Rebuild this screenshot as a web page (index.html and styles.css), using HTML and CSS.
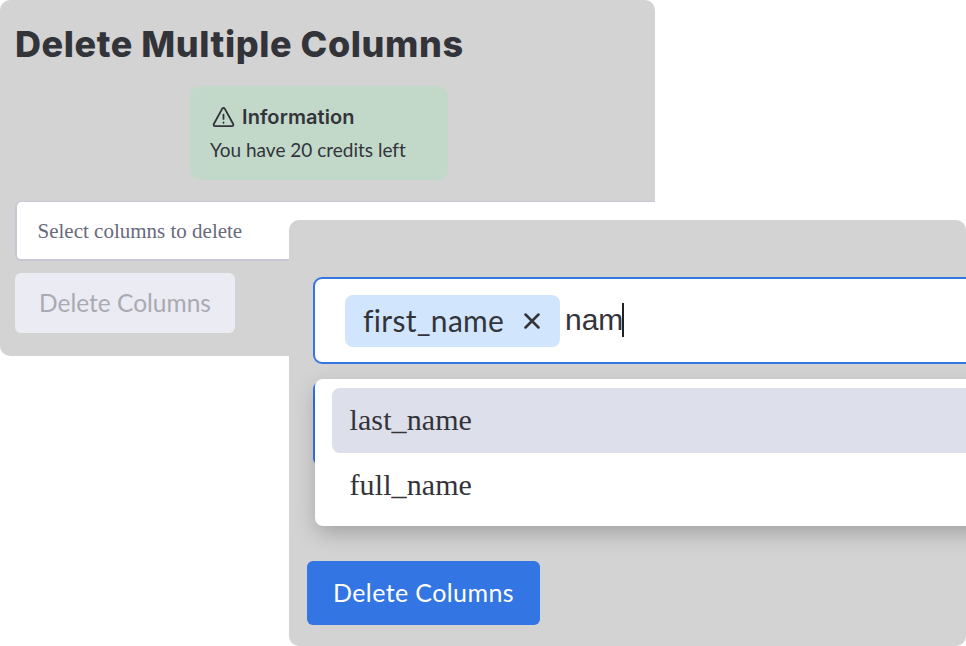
FILE: index.html
```html
<!DOCTYPE html>
<html lang="en">
<head>
<meta charset="utf-8">
<title>Delete Multiple Columns</title>
<link rel="stylesheet" href="styles.css">
</head>
<body>
<main class="stage">
  <section class="card card-back">
    <h1 class="title">Delete Multiple Columns</h1>
    <div class="notice">
      <div class="notice-head">
        <svg class="notice-icon" viewBox="0 0 24 24" fill="none" stroke="currentColor" stroke-width="1.9" stroke-linecap="round" stroke-linejoin="round"><path d="M12 2c-.6 0-1 .3-1.300.8L1.900 18.800c-.6 1.100.1 2.200 1.300 2.200h17.600c1.200 0 1.900-1.100 1.300-2.200L13.300 2.800c-.3-.5-.7-.8-1.300-.8z"/><path d="M12 9v4.500M12 17.200v.3"/></svg>
        <strong class="notice-title">Information</strong>
      </div>
      <p class="notice-text">You have 20 credits left</p>
    </div>
    <div class="select"><span class="placeholder">Select columns to delete</span></div>
    <button class="button button-disabled" disabled><span>Delete Columns</span></button>
  </section>
  <section class="card card-front">
    <div class="field">
      <span class="chip"><span class="chip-label">first_name</span>
        <svg class="chip-close" viewBox="0 0 16 16" fill="none" stroke="currentColor" stroke-width="2.500" stroke-linecap="round"><path d="M1.500 1.500l13 13M14.500 1.500l-13 13"/></svg>
      </span>
      <span class="query">nam</span><span class="caret"></span>
    </div>
    <div class="menu-wrap">
      <div class="menu">
        <div class="option option-active">last_name</div>
        <div class="option">full_name</div>
      </div>
    </div>
    <button class="button button-primary"><span>Delete Columns</span></button>
  </section>
</main>
</body>
</html>
```
FILE: styles.css
```css
* { box-sizing: border-box; }
body { margin: 0; background: #fff; color: #33343a; font-family: Lato, sans-serif; font-variant-ligatures: none; overflow: hidden; }
.stage { display: grid; width: 966px; height: 646px; }
.card { grid-area: 1 / 1; background: #d3d3d3; border-radius: 10px; overflow: hidden; display: flex; flex-direction: column; align-items: flex-start; }
.card-back { width: 655px; height: 356px; padding: 21px 0 0 15px; }
.card-front { width: 677px; height: 426px; margin: 220px 0 0 289px; padding-top: 57px; }
.title { margin: 0; height: 46px; font: 800 36px/46px Inter, sans-serif; letter-spacing: .57px; white-space: nowrap; }
.notice { width: 258px; height: 94px; margin: 19px 0 0 175px; padding: 17px 20px; border-radius: 10px; background: #c2d9ca; }
.notice-head { display: flex; align-items: center; gap: 7px; height: 28px; padding-left: 2px; }
.notice-icon { width: 23px; height: 23px; }
.notice-title { font: 600 20px/28px Inter, sans-serif; letter-spacing: .1px; }
.notice-text { margin: 6px 0 0; font-size: 19px; line-height: 26px; white-space: nowrap; }
.select { display: flex; align-items: center; width: 660px; height: 60px; margin-top: 21px; padding: 0 0 0 20.500px; border: 2px solid #c7c7d5; border-top-width: 1px; border-radius: 6px; background: #fff; }
.placeholder { color: #696a7b; font: 21px/28px "Liberation Serif", serif; }
.button { display: flex; align-items: center; justify-content: center; border: 0; border-radius: 6px; padding: 0 0 2px; font: 25px/32px Lato, sans-serif; white-space: nowrap; }
.button-disabled { width: 220px; height: 60px; margin-top: 12px; background: #ebebf4; color: #aaaab1; font-size: 24.500px; padding-bottom: 0; }
.field { display: flex; align-items: center; width: 670px; height: 87px; margin-left: 24px; padding-left: 30px; border: 2.500px solid #3476e2; border-radius: 9px; background: #fff; }
.chip { display: flex; align-items: center; width: 215px; height: 52px; padding-left: 18px; border-radius: 8px; background: #d1e5fd; }
.chip-label { width: 142px; padding-bottom: 2px; font-size: 30px; line-height: 44px; letter-spacing: .3px; }
.chip-close { width: 16px; height: 16px; margin-left: 19px; }
.query { margin-left: 5px; padding-bottom: 1px; font: 30px/40px "Liberation Sans", sans-serif; }
.caret { width: 2px; height: 34px; margin: 0 0 2px -1px; background: #222; }
.menu-wrap { width: 670px; height: 83px; margin: 18px 0 0 24px; border-left: 2px solid #3476e2; border-radius: 7px 0 0 7px; }
.menu { width: 700px; height: 147px; margin-top: -3px; padding: 9px 17px; border-radius: 8px; background: #fff; box-shadow: 0 8px 22px -2px rgba(0, 0, 0, .25); }
.option { height: 65px; padding-left: 17.500px; border-radius: 8px; font: 30px/63px "Liberation Serif", serif; letter-spacing: .1px; }
.option-active { background: #dddfea; }
.button-primary { width: 233px; height: 64px; margin: 96px 0 0 18px; background: #3375e2; color: #fff; letter-spacing: .4px; }
```
